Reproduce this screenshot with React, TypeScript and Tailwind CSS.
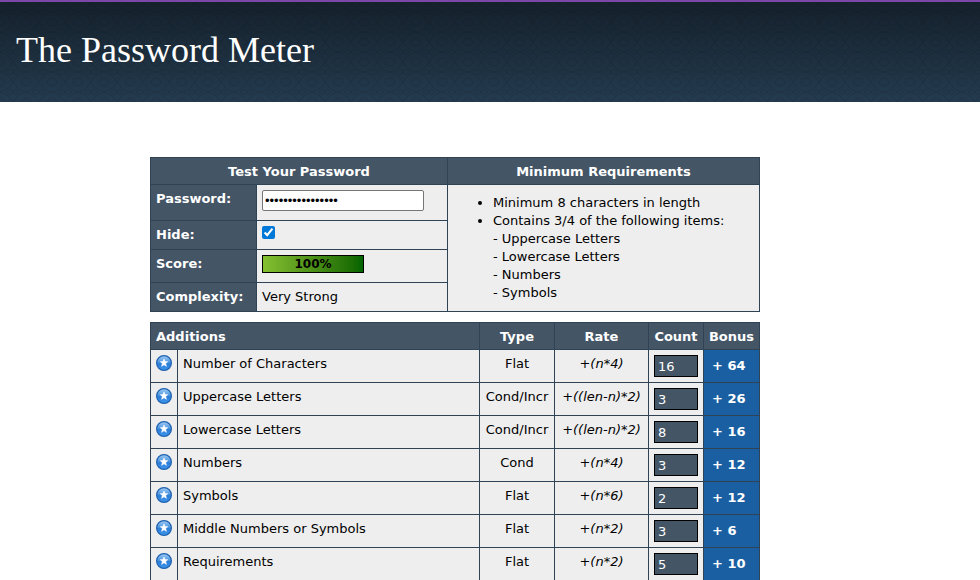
import { useState } from "react";

type Addition = {
  name: string;
  type: string;
  rate: string;
  count: number;
  bonus: number;
};

const additions: Addition[] = [
  { name: "Number of Characters", type: "Flat", rate: "+(n*4)", count: 16, bonus: 64 },
  { name: "Uppercase Letters", type: "Cond/Incr", rate: "+((len-n)*2)", count: 3, bonus: 26 },
  { name: "Lowercase Letters", type: "Cond/Incr", rate: "+((len-n)*2)", count: 8, bonus: 16 },
  { name: "Numbers", type: "Cond", rate: "+(n*4)", count: 3, bonus: 12 },
  { name: "Symbols", type: "Flat", rate: "+(n*6)", count: 2, bonus: 12 },
  { name: "Middle Numbers or Symbols", type: "Flat", rate: "+(n*2)", count: 3, bonus: 6 },
  { name: "Requirements", type: "Flat", rate: "+(n*2)", count: 5, bonus: 10 },
];

const cell = "border border-[#2f4354] px-[5px] pt-[5px] align-top";
const centered = "border border-[#2f4354] px-1 pt-[5px] text-center align-top whitespace-nowrap";
const head = "border border-[#2f4354] bg-[#445566] px-1 pt-[5px] align-top font-bold text-white";
const rowHead =
  "border border-[#2f4354] bg-[#445566] px-[5px] pt-[5px] text-left align-top font-bold text-white";

function StarBadge() {
  return (
    <svg viewBox="0 0 16 16" className="block h-4 w-4" role="img" aria-label="Exceptional">
      <defs>
        <linearGradient id="badge" x1="0" y1="0" x2="0" y2="1">
          <stop offset="0" stopColor="#a3cdf4" />
          <stop offset="0.45" stopColor="#4f97e0" />
          <stop offset="0.55" stopColor="#2b7cd6" />
          <stop offset="1" stopColor="#3f98ee" />
        </linearGradient>
      </defs>
      <circle cx="8" cy="8" r="7.4" fill="url(#badge)" stroke="#1f62b0" strokeWidth="1.2" />
      <path
        d="M8 4 L9.1 6.4 L11.7 6.7 L9.7 8.5 L10.4 11.3 L8 9.8 L5.6 11.3 L6.3 8.5 L4.3 6.7 L6.9 6.4 Z"
        fill="#fff"
        stroke="#fff"
        strokeWidth="0.6"
        strokeLinejoin="round"
      />
    </svg>
  );
}

function HeaderTexture() {
  return (
    <svg className="pointer-events-none absolute inset-0 h-full w-full" aria-hidden="true">
      <defs>
        <pattern id="damask" width="26" height="20" patternUnits="userSpaceOnUse">
          <g fill="none" stroke="#000" strokeWidth="1" opacity="0.1">
            <path d="M0 10 Q7 9 13 0 Q19 9 26 10 Q19 11 13 20 Q7 11 0 10" />
            <path d="M7 10 Q10 5 13 10 Q16 15 19 10 M7 10 Q10 15 13 10 Q16 5 19 10" />
            <path d="M0 4 Q4 4 5 0 M26 4 Q22 4 21 0 M0 16 Q4 16 5 20 M26 16 Q22 16 21 20" />
          </g>
        </pattern>
      </defs>
      <rect width="100%" height="100%" fill="url(#damask)" />
    </svg>
  );
}

function SummaryTable() {
  const [password, setPassword] = useState("Abc1def2!Ghi3jk#");
  const [hidden, setHidden] = useState(true);
  return (
    <table className="w-full table-fixed border-collapse bg-[#eeeeee]">
      <colgroup>
        <col className="w-[106px]" />
        <col className="w-[191px]" />
        <col />
      </colgroup>
      <tbody>
        <tr className="h-[27px]">
          <th colSpan={2} scope="colgroup" className={head}>
            Test Your Password
          </th>
          <th scope="col" className={head}>
            Minimum Requirements
          </th>
        </tr>
        <tr className="h-9">
          <th scope="row" className={rowHead}>
            <label htmlFor="password">Password:</label>
          </th>
          <td className={cell}>
            <input
              id="password"
              type={hidden ? "password" : "text"}
              value={password}
              onChange={(e) => setPassword(e.target.value)}
              autoComplete="off"
              className="block h-[21px] w-[162px] rounded-xs border border-[#767676] bg-white px-0.5 font-['Liberation_Sans',sans-serif] text-[13px] text-black"
            />
          </td>
          <td rowSpan={4} className="border border-[#2f4354] px-[5px] pt-[9px] align-top">
            <ul className="list-disc pl-10">
              <li>Minimum 8 characters in length</li>
              <li>
                Contains 3/4 of the following items:
                <br />- Uppercase Letters
                <br />- Lowercase Letters
                <br />- Numbers
                <br />- Symbols
              </li>
            </ul>
          </td>
        </tr>
        <tr className="h-[29px]">
          <th scope="row" className={rowHead}>
            <label htmlFor="hide">Hide:</label>
          </th>
          <td className={cell}>
            <input
              id="hide"
              type="checkbox"
              checked={hidden}
              onChange={(e) => setHidden(e.target.checked)}
              className="block h-[13px] w-[13px] accent-[#0078d7]"
            />
          </td>
        </tr>
        <tr className="h-[33px]">
          <th scope="row" className={rowHead}>
            Score:
          </th>
          <td className={cell}>
            <div className="h-[18px] w-[102px] border border-black bg-linear-to-r from-[#84bf30] to-[#006400] text-center text-[12px] leading-4 font-bold text-black">
              100%
            </div>
          </td>
        </tr>
        <tr className="h-[29px]">
          <th scope="row" className={rowHead}>
            Complexity:
          </th>
          <td className={cell}>Very Strong</td>
        </tr>
      </tbody>
    </table>
  );
}

function AdditionsTable() {
  return (
    <table className="w-full table-fixed border-collapse bg-[#eeeeee]">
      <colgroup>
        <col className="w-[27px]" />
        <col />
        <col className="w-[75px]" />
        <col className="w-[94px]" />
        <col className="w-[55px]" />
        <col className="w-[56px]" />
      </colgroup>
      <thead>
        <tr className="h-[27px]">
          <th colSpan={2} scope="colgroup" className={rowHead}>
            Additions
          </th>
          <th scope="col" className={head}>Type</th>
          <th scope="col" className={head}>Rate</th>
          <th scope="col" className={head}>Count</th>
          <th scope="col" className={head}>Bonus</th>
        </tr>
      </thead>
      <tbody>
        {additions.map((row) => (
          <tr key={row.name} className="h-[33px]">
            <td className={cell}>
              <StarBadge />
            </td>
            <td className={cell}>{row.name}</td>
            <td className={centered}>{row.type}</td>
            <td className={centered}>
              <i>{row.rate}</i>
            </td>
            <td className={cell}>
              <input
                type="text"
                readOnly
                value={row.count}
                aria-label={`${row.name} count`}
                className="block h-[22px] w-11 border border-black bg-[#445566] px-[3px] text-[13px] text-white"
              />
            </td>
            <td className="border border-[#2f4354] bg-[#1b5fa3] px-2 pt-[7px] align-top font-bold whitespace-nowrap text-white">
              + {row.bonus}
            </td>
          </tr>
        ))}
      </tbody>
    </table>
  );
}

export default function App() {
  return (
    <div className="h-screen overflow-hidden bg-white font-['Verdana','DejaVu_Sans',sans-serif] text-[13px] leading-[18px] text-black">
      <header className="relative border-t-2 border-[#7b47a8] bg-linear-to-b from-[#15212c] to-[#243b4f] px-4 pt-7 pb-8">
        <HeaderTexture />
        <h1 className="relative font-['Georgia','Liberation_Serif',serif] text-[36px] leading-10 text-white">
          The Password Meter
        </h1>
      </header>
      <main className="mx-auto mt-[55px] max-w-[680px]">
        <div className="flex max-w-[610px] flex-col gap-2.5">
          <SummaryTable />
          <AdditionsTable />
        </div>
      </main>
    </div>
  );
}
